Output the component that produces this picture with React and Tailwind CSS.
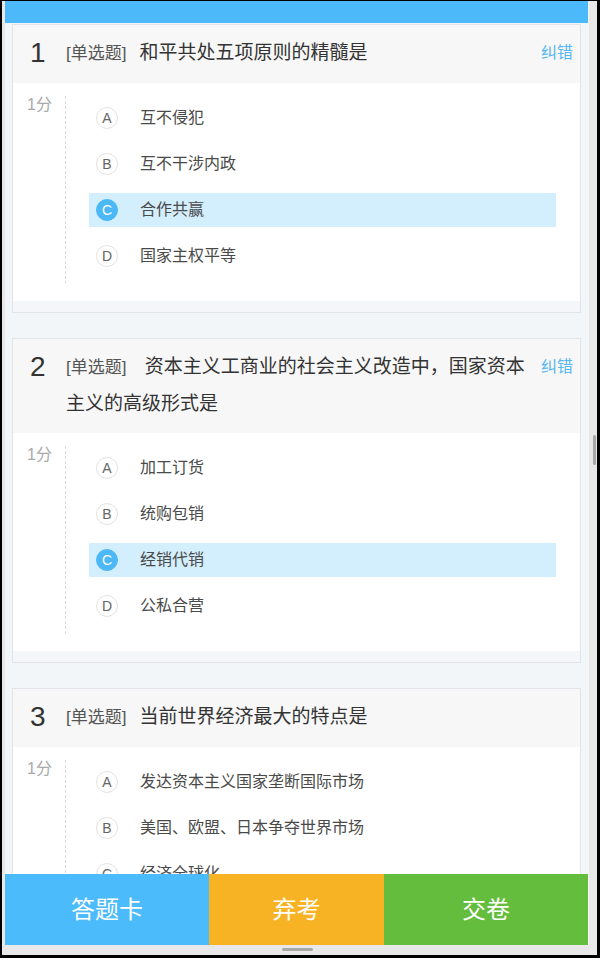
import React from 'react';

const questions = [
  {
    no: 1,
    title: '和平共处五项原则的精髓是',
    options: ['互不侵犯', '互不干涉内政', '合作共赢', '国家主权平等'],
    picked: 2,
    report: true,
  },
  {
    no: 2,
    title: '\u00a0资本主义工商业的社会主义改造中，国家资本主义的高级形式是',
    options: ['加工订货', '统购包销', '经销代销', '公私合营'],
    picked: 2,
    report: true,
  },
  {
    no: 3,
    title: '当前世界经济最大的特点是',
    options: ['发达资本主义国家垄断国际市场', '美国、欧盟、日本争夺世界市场', '经济全球化', '世界经济多极化'],
    picked: -1,
    report: false,
  },
];

const letters = ['A', 'B', 'C', 'D'];

const Option = ({ letter, text, active }) => (
  <div className={`flex h-[34px] shrink-0 items-center pl-[7px] ${active ? 'bg-[#d3eefc]' : ''}`}>
    <span
      className={`flex h-[22px] w-[22px] items-center justify-center rounded-full border text-[14px] ${
        active ? 'border-[#4cb8f6] bg-[#4cb8f6] text-white' : 'border-[#e3e3e3] bg-white text-[#666]'
      }`}
    >
      {letter}
    </span>
    <span className="ml-[22px] text-[16px] text-[#4a4a4a]">{text}</span>
  </div>
);

const QuestionCard = ({ q }) => (
  <div className="border border-[#e1e4e8] bg-[#f4f6f9] pb-[11px]">
    <div className="flex items-start bg-[#f7f7f7] pb-[11px] pl-[17px] pr-[7px] pt-[10px] leading-[36px]">
      <div className="w-[36px] shrink-0 text-[28px] text-[#333]">{q.no}</div>
      <div className="min-w-0 flex-1 text-[19px] text-[#333]">
        <span className="mr-[13px] text-[17px] text-[#555]">[单选题]</span>
        {q.title}
      </div>
      {q.report && <div className="ml-[4px] shrink-0 text-[16px] text-[#56b6f0]">纠错</div>}
    </div>
    <div className="flex bg-white pb-[17px] pt-[13px]">
      <div className="w-[52px] shrink-0 pl-[14px] text-[16px] leading-[18px] text-[#aaa]">1分</div>
      <div className="flex flex-1 flex-col gap-[12px] border-l border-dashed border-[#dcdcdc] pb-[11px] pl-[23px] pr-[24px] pt-[5px]">
        {q.options.map((o, i) => (
          <Option key={o} letter={letters[i]} text={o} active={i === q.picked} />
        ))}
      </div>
    </div>
  </div>
);

const App = () => {
  return (
    <div className="h-[958px] w-[600px] bg-black pb-[3px] pl-[2px] pr-[3px] pt-px font-['Liberation_Sans','Noto_Sans_CJK_SC',sans-serif]">
      <div className="flex h-full flex-col bg-[#e8e8e8]">
        <div className="flex min-h-0 flex-1">
          <div className="ml-[3px] flex min-w-0 flex-1 flex-col overflow-hidden bg-[#f3f6f9]">
            <div className="h-[22px] shrink-0 bg-[#4cbafa]" />
            <div className="min-h-0 flex-1 overflow-hidden px-[7px] pt-px">
              <div className="flex flex-col gap-[25px]">
                {questions.map((q) => (
                  <QuestionCard key={q.no} q={q} />
                ))}
              </div>
            </div>
            <div className="flex h-[71px] shrink-0 text-[24px] text-white">
              <button className="flex w-[35%] items-center justify-center bg-[#4cbbfb]">答题卡</button>
              <button className="flex w-[30%] items-center justify-center bg-[#f8b324]">弃考</button>
              <button className="flex w-[35%] items-center justify-center bg-[#64bd3d]">交卷</button>
            </div>
          </div>
          <div className="w-[9px] shrink-0 border-l border-[#f7f7f7]">
            <div className="ml-[4px] mt-[434px] h-[30px] w-[3px] rounded-sm bg-[#a8a8a8]" />
          </div>
        </div>
        <div className="h-[10px] shrink-0 pt-[3px]">
          <div className="ml-[280px] h-[3px] w-[31px] rounded-sm bg-[#a8a8a8]" />
        </div>
      </div>
    </div>
  );
};

export default App;
